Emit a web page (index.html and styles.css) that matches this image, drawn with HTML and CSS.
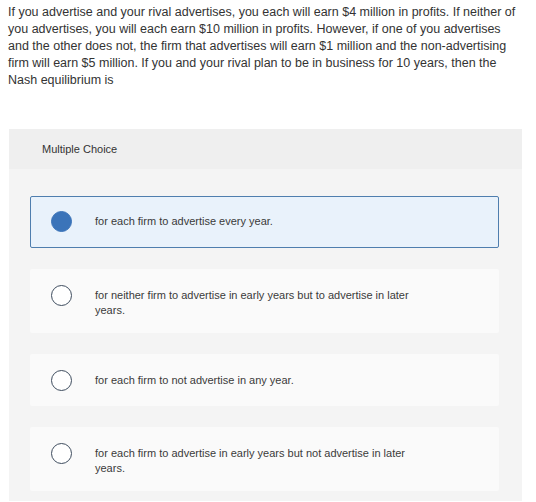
FILE: index.html
```html
<!doctype html>
<html lang="en">
<head>
  <meta charset="UTF-8">
  <title>Multiple Choice</title>
  <link rel="stylesheet" href="styles.css">
</head>
<body>
  <p class="question">
    If you advertise and your rival advertises, you each will earn $4 million in profits. If neither of
    you advertises, you will each earn $10 million in profits. However, if one of you advertises
    and the other does not, the firm that advertises will earn $1 million and the non-advertising
    firm will earn $5 million. If you and your rival plan to be in business for 10 years, then the
    Nash equilibrium is
  </p>

  <div class="panel">
    <div class="panel-head">Multiple Choice</div>
    <div class="panel-body">
      <div class="option selected">
        <span class="radio"></span>
        <span class="label">for each firm to advertise every year.</span>
      </div>
      <div class="option">
        <span class="radio"></span>
        <span class="label">for neither firm to advertise in early years but to advertise in later years.</span>
      </div>
      <div class="option">
        <span class="radio"></span>
        <span class="label">for each firm to not advertise in any year.</span>
      </div>
      <div class="option">
        <span class="radio"></span>
        <span class="label">for each firm to advertise in early years but not advertise in later years.</span>
      </div>
    </div>
  </div>
</body>
</html>
```

FILE: styles.css
```css
body{
  margin: 0;
  background: #ffffff;
  color: #333333;
  font-family: "Liberation Sans", Arial, sans-serif;
}
.question{
  margin: 0;
  padding: 4px 8px 0 8px;
  width: 509px;
  font-size: 12.5px;
  line-height: 17px;
}
.panel{
  margin: 40px 0 0 9px;
  width: 513px;
}
.panel-head{
  height: 40px;
  line-height: 40px;
  padding-left: 33px;
  background: #efefef;
  font-size: 11px;
  color: #333333;
}
.panel-body{
  background: #f4f4f4;
  padding: 27px 23px 10px 21px;
  display: flex;
  flex-direction: column;
  gap: 21px;
}
.option{
  display: flex;
  align-items: flex-start;
  box-sizing: border-box;
  min-height: 52px;
  padding: 19px 20px 15px 21px;
  background: #fafafa;
  border-radius: 2px;
  font-size: 11px;
  line-height: 15px;
  color: #3a3a3a;
}
.option.selected{
  background: #e9f2fb;
  border: 1px solid #4f7eae;
  padding: 17px 19px 15px 20px;
}
.radio{
  flex: none;
  width: 19px;
  height: 19px;
  margin: -3.5px 0 -3.5px 0;
  border: 1.5px solid #3e4c5e;
  border-radius: 50%;
  background: #ffffff;
}
.selected .radio{
  background: #3b74b9;
  border-color: #3b74b9;
}
.label{
  margin-left: 23px;
  max-width: 320px;
}
```
